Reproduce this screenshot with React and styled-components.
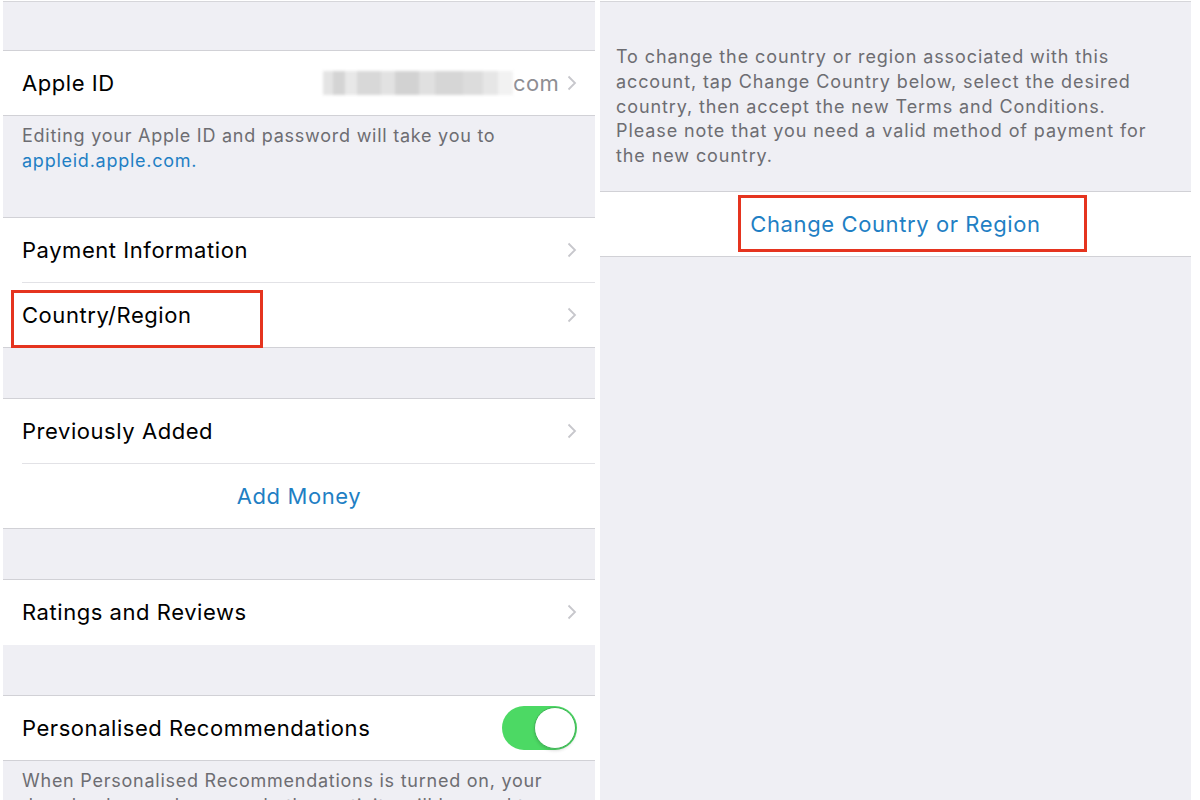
import styled, { createGlobalStyle } from 'styled-components';

const GlobalStyle = createGlobalStyle`
  html, body {
    margin: 0;
    padding: 0;
    background: #ffffff;
    font-family: 'Inter', 'Roboto', 'Liberation Sans', sans-serif;
    -webkit-font-smoothing: antialiased;
  }
`;

const Chevron = () => (
  <svg width="10" height="16" viewBox="0 0 10 16">
    <polyline points="1.5,1.5 8,8 1.5,14.5" fill="none" stroke="#c7c7cc" strokeWidth="1.8" />
  </svg>
);

const LeftScreen = () => (
  <Panel>
    <Spacer $h={48} />
    <Group>
      <Row>
        <Label>Apple ID</Label>
        <Accessory>
          <Blurred />
          <Value>com</Value>
          <Chevron />
        </Accessory>
      </Row>
    </Group>
    <Footer $pt={8} $h={101}>
      Editing your Apple ID and password will take you to
      <br />
      <Link>appleid.apple.com.</Link>
    </Footer>
    <Group>
      <Row>
        <Label>Payment Information</Label>
        <Chevron />
      </Row>
      <Divider />
      <Row>
        <Marked>Country/Region</Marked>
        <Chevron />
      </Row>
    </Group>
    <Spacer $h={50} />
    <Group>
      <Row>
        <Label>Previously Added</Label>
        <Chevron />
      </Row>
      <Divider />
      <ActionRow>
        <Action>Add Money</Action>
      </ActionRow>
    </Group>
    <Spacer $h={50} />
    <Group $open>
      <Row>
        <Label>Ratings and Reviews</Label>
        <Chevron />
      </Row>
    </Group>
    <Spacer $h={50} />
    <Group>
      <Row>
        <Label>Personalised Recommendations</Label>
        <Toggle>
          <Knob />
        </Toggle>
      </Row>
    </Group>
    <Footer $pt={8}>
      When Personalised Recommendations is turned on, your
      <br />
      downloads, purchases and other activity will be used to
    </Footer>
  </Panel>
);

const RightScreen = () => (
  <Panel $right>
    <Footer $pt={43} $pb={22} $pl={16} $track={0.9}>
      To change the country or region associated with this
      <br />
      account, tap Change Country below, select the desired
      <br />
      country, then accept the new Terms and Conditions.
      <br />
      Please note that you need a valid method of payment for
      <br />
      the new country.
    </Footer>
    <Group>
      <ActionRow>
        <ActionMarked>Change Country or Region</ActionMarked>
      </ActionRow>
    </Group>
  </Panel>
);

export default function App() {
  return (
    <>
      <GlobalStyle />
      <Page>
        <LeftScreen />
        <RightScreen />
      </Page>
    </>
  );
}

const Page = styled.div`
  display: flex;
  gap: 5px;
  padding: 1px 8px 0 3px;
  height: 799px;
  overflow: hidden;
`;

const Panel = styled.div`
  flex: 0 0 ${(p) => (p.$right ? '591px' : '592px')};
  display: flex;
  flex-direction: column;
  background: #efeff4;
  border-top: 1px solid #d6d6da;
  overflow: hidden;
`;

const Spacer = styled.div`
  height: ${(p) => p.$h}px;
  flex-shrink: 0;
`;

const Group = styled.div`
  background: #ffffff;
  border-top: 1px solid #d1d1d6;
  border-bottom: 1px solid ${(p) => (p.$open ? '#ffffff' : '#d1d1d6')};
  flex-shrink: 0;
`;

const Row = styled.div`
  height: 64px;
  display: flex;
  align-items: center;
  justify-content: space-between;
  padding: 0 18px 0 19px;
  box-sizing: border-box;
`;

const Divider = styled.div`
  height: 1px;
  margin-left: 19px;
  background: #e2e2e6;
`;

const Label = styled.span`
  font-size: 22px;
  color: #000000;
  letter-spacing: 0.55px;
`;

const Marked = styled(Label)`
  position: relative;
  &::after {
    content: '';
    position: absolute;
    left: -11px;
    right: -71px;
    top: -12px;
    bottom: -20px;
    border: 3px solid #e5341f;
  }
`;

const Accessory = styled.div`
  display: flex;
  align-items: center;
  gap: 8px;
`;

const Blurred = styled.div`
  width: 190px;
  height: 24px;
  margin-right: -8px;
  filter: blur(1.6px);
  background: linear-gradient(
    to right,
    #e4e4e4 0 10px,
    #d4d4d4 10px 22px,
    #e8e8e8 22px 34px,
    #d8d8d8 34px 58px,
    #e2e2e2 58px 72px,
    #d2d2d2 72px 96px,
    #e0e0e0 96px 112px,
    #d6d6d6 112px 140px,
    #dcdcdc 140px 160px,
    #e6e6e6 160px 175px,
    #f2f2f2 175px 190px
  );
`;

const Value = styled.span`
  font-size: 22px;
  color: #8e8e93;
  letter-spacing: 0.3px;
`;

const Footer = styled.div`
  padding: ${(p) => p.$pt}px 10px ${(p) => p.$pb || 0}px ${(p) => p.$pl || 19}px;
  ${(p) => (p.$h ? `height: ${p.$h}px;` : '')}
  box-sizing: border-box;
  font-size: 18px;
  line-height: 24.8px;
  letter-spacing: ${(p) => p.$track || 0.75}px;
  color: #6d6d72;
  white-space: nowrap;
  flex-shrink: 0;
`;

const Link = styled.span`
  color: #1f7fc4;
`;

const ActionRow = styled.div`
  height: 64px;
  display: flex;
  align-items: center;
  justify-content: center;
`;

const Action = styled.span`
  font-size: 22px;
  color: #1f7fc4;
  letter-spacing: 0.6px;
`;

const ActionMarked = styled(Action)`
  position: relative;
  &::after {
    content: '';
    position: absolute;
    left: -12px;
    right: -46px;
    top: -16px;
    bottom: -15px;
    border: 3px solid #e5341f;
  }
`;

const Toggle = styled.div`
  width: 75px;
  height: 44px;
  border-radius: 22px;
  background: #4cd964;
  display: flex;
  align-items: center;
  justify-content: flex-end;
  box-sizing: border-box;
  padding: 1px;
`;

const Knob = styled.div`
  width: 42px;
  height: 42px;
  border-radius: 50%;
  background: #ffffff;
  box-sizing: border-box;
  border: 1px solid #3fb556;
  box-shadow: 0 2px 3px rgba(0, 0, 0, 0.12);
`;
